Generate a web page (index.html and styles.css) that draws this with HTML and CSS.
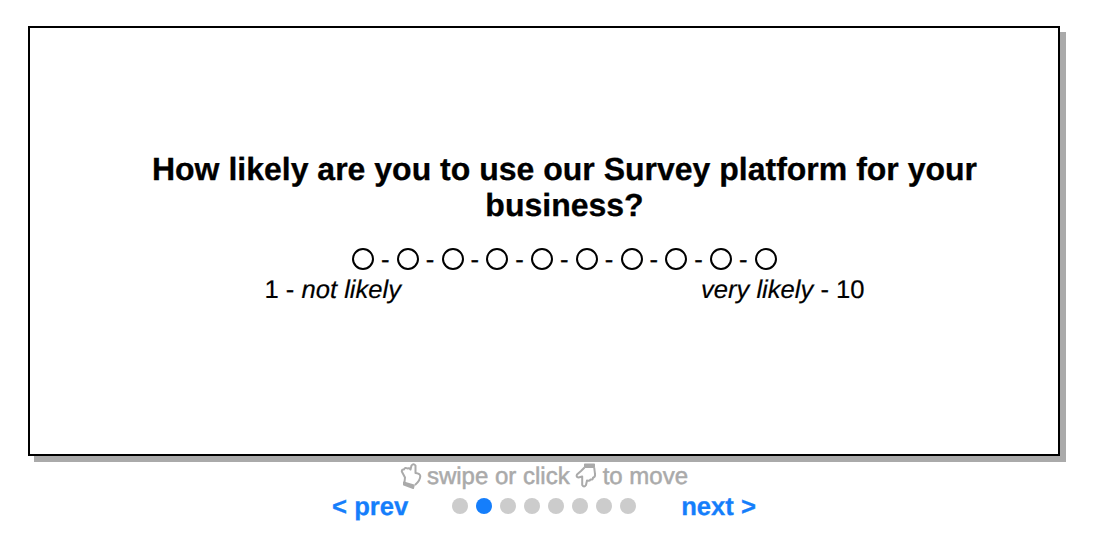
FILE: index.html
```html
<!DOCTYPE html>
<html lang="en">
<head>
<meta charset="utf-8">
<title>Survey</title>
<link rel="stylesheet" href="styles.css">
</head>
<body>
<main class="card">
  <h1 class="question">How likely are you to use our Survey platform for your business?</h1>
  <div class="scale"><i class="radio"></i><span>-</span><i class="radio"></i><span>-</span><i class="radio"></i><span>-</span><i class="radio"></i><span>-</span><i class="radio"></i><span>-</span><i class="radio"></i><span>-</span><i class="radio"></i><span>-</span><i class="radio"></i><span>-</span><i class="radio"></i><span>-</span><i class="radio"></i></div>
  <div class="labels"><span>1 - <em>not likely</em></span><span><em>very likely</em> - 10</span></div>
</main>
<footer class="footer">
  <p class="hint">
    <svg class="hand" viewBox="0 0 22 28"><path d="M4.500 20L5 15.500L1.800 9.500Q1.800 7 4 7.500Q5 5 7.500 6.500Q9.500 5.500 10.500 7.500L11.500 3.500Q13.500 1 15.500 3.500L15.500 11Q20 11.500 20.300 14Q20.300 18.500 15 23"/><path class="cuff" d="M3.800 20.300L14 23.200L13.200 26.300L3.800 22.800Z"/></svg>
    <span>swipe or click</span>
    <svg class="hand" viewBox="0 0 22 28"><path d="M9.500 5.500L6 9L2 12.500Q0.800 15 3.500 15.500L7.200 14.500V23Q9 26 11 23L12 18.500Q14.500 19.500 15.500 17.500Q18 18 18 15.800Q20.500 15 20 12L19.200 5.500"/><path class="cuff" d="M9.800 2.200H19.200V5.300H9.800Z"/></svg>
    <span>to move</span>
  </p>
  <nav class="nav">
    <a class="prev">&lt; prev</a>
    <div class="dots"><i class="dot"></i><i class="dot active"></i><i class="dot"></i><i class="dot"></i><i class="dot"></i><i class="dot"></i><i class="dot"></i><i class="dot"></i></div>
    <a class="next">next &gt;</a>
  </nav>
</footer>
</body>
</html>
```
FILE: styles.css
```css
* { box-sizing: border-box; }
body { margin: 0; padding: 26px 28px; background: #fff; color: #000; font-family: "Liberation Sans", Arial, sans-serif; font-size: 25.6px; line-height: 30px; text-rendering: geometricPrecision; }
.card { width: 1032px; height: 430px; border: 2px solid #000; box-shadow: 6px 6px 0 #aaa; padding: 123px 41px 0 82px; }
.question { margin: 0; font-size: 32px; line-height: 36px; text-align: center; -webkit-text-stroke: 0.3px #000; }
.scale { display: flex; justify-content: space-between; align-items: center; width: 425px; height: 30px; margin: 21px auto 0; -webkit-text-stroke: 0.3px #000; }
.scale span { padding-top: 2px; }
.radio { width: 22px; height: 22px; border: 2px solid #000; border-radius: 50%; }
.labels { display: flex; justify-content: space-between; width: 600px; margin: 0 auto; padding-top: 1px; -webkit-text-stroke: 0.2px #000; }
.footer { width: 1032px; padding-top: 6px; }
.hint { display: flex; justify-content: center; gap: 5px; margin: 0; color: #aaa; font-size: 24px; -webkit-text-stroke: 0.5px #aaa; }
.hint span:last-child { margin-left: 1px; }
.hand { width: 22px; height: 28px; fill: none; stroke: #aaa; stroke-width: 2; stroke-linejoin: round; }
.cuff { fill: #aaa; stroke-width: 1.6; }
.nav { display: flex; justify-content: center; align-items: flex-start; color: #157efb; font-weight: bold; -webkit-text-stroke: 0.3px #157efb; }
.dots { display: flex; gap: 8px; margin: 6px 45px 0 44px; }
.dot { width: 16px; height: 16px; border-radius: 50%; background: #ccc; }
.active { background: #157efb; }
```
